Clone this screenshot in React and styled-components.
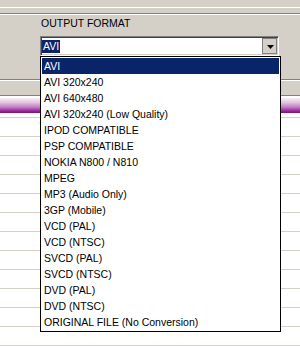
import React from 'react'
import styled, { createGlobalStyle } from 'styled-components'

const formats = [
  'AVI',
  'AVI 320x240',
  'AVI 640x480',
  'AVI 320x240 (Low Quality)',
  'IPOD COMPATIBLE',
  'PSP COMPATIBLE',
  'NOKIA N800 / N810',
  'MPEG',
  'MP3 (Audio Only)',
  '3GP (Mobile)',
  'VCD (PAL)',
  'VCD (NTSC)',
  'SVCD (PAL)',
  'SVCD (NTSC)',
  'DVD (PAL)',
  'DVD (NTSC)',
  'ORIGINAL FILE (No Conversion)'
]

const GlobalStyle = createGlobalStyle`
  html, body {
    margin: 0;
    padding: 0;
    background: #fff;
  }
  body {
    font-family: "Liberation Sans", Arial, sans-serif;
    font-size: 10.5px;
    color: #000;
  }
`

const Window = styled.div`
  position: relative;
  width: 300px;
  height: 346px;
  overflow: hidden;
  background: #fff;
  display: flex;
  flex-direction: column;
`

const Panel = styled.div`
  background: #d4d0c8;
  display: flex;
  flex-direction: column;
  flex: none;
`

const Gap = styled.div`
  height: ${p => p.$h}px;
  flex: none;
`

const Rule = styled.div`
  height: 1px;
  background: ${p => p.$color};
  flex: none;
`

const Group = styled.div`
  height: 64px;
  box-sizing: border-box;
  padding: 2px 0 0 40px;
  display: flex;
  flex-direction: column;
`

const Label = styled.div`
  line-height: 13px;
  padding-left: 1px;
`

const ComboWrap = styled.div`
  position: relative;
  margin-top: 6px;
  width: 239px;
`

const Combo = styled.div`
  height: 20px;
  box-sizing: border-box;
  border: 1px solid;
  border-color: #808080 #fff #fff #808080;
  box-shadow: inset 1px 1px #404040, inset -1px -1px #d4d0c8;
  background: #fff;
  padding: 1px;
  display: flex;
  align-items: center;
`

const Value = styled.span`
  background: #0a246a;
  color: #fff;
  line-height: 13px;
  padding: 0 1px;
`

const DropButton = styled.div`
  margin-left: auto;
  width: 15px;
  height: 16px;
  box-sizing: border-box;
  background: #d4d0c8;
  border: 1px solid #808080;
  display: flex;
  align-items: center;
  justify-content: center;
  padding: 1px 0 0 1px;
`

const List = styled.div`
  position: absolute;
  top: 100%;
  left: 0;
  width: 241px;
  box-sizing: border-box;
  border: 1px solid #000;
  background: #fff;
  padding: 1px;
  z-index: 2;
`

const Item = styled.div`
  height: 16px;
  line-height: 16px;
  padding-left: 2px;
  white-space: nowrap;
  background: ${p => (p.$selected ? '#0a246a' : 'transparent')};
  color: ${p => (p.$selected ? '#fff' : '#000')};
`

const HeaderBand = styled.div`
  height: 14px;
`

const Grid = styled.div`
  flex: 1;
  background: #fff;
  display: flex;
  flex-direction: column;
`

const Row = styled.div`
  flex: none;
  height: ${p => (p.$first ? 21 : 18)}px;
  border-bottom: 1px solid #d4d0c8;
  display: flex;
  flex-direction: column;
`

const SelectedBar = styled.div`
  margin-top: 2px;
  height: 15px;
  background: linear-gradient(
    to bottom,
    #f7eef6 0%,
    #e4c3e1 30%,
    #c47fc4 60%,
    #9a2a9c 85%,
    #7e0a82 100%
  );
`

const Arrow = () => (
  <svg width='7' height='4' viewBox='0 0 7 4'>
    <polygon points='0,0 7,0 3.5,4' fill='#000' />
  </svg>
)

export default function App () {
  const rows = Array.from({ length: 13 })
  return (
    <Window>
      <GlobalStyle />
      <Panel>
        <Gap $h={7} />
        <Rule $color='#fff' />
        <Gap $h={5} />
        <Rule $color='#808080' />
        <Rule $color='#fff' />
        <Group>
          <Label>OUTPUT FORMAT</Label>
          <ComboWrap>
            <Combo>
              <Value>AVI</Value>
              <DropButton>
                <Arrow />
              </DropButton>
            </Combo>
            <List>
              {formats.map((f, i) => (
                <Item key={f} $selected={i === 0}>{f}</Item>
              ))}
            </List>
          </ComboWrap>
        </Group>
        <Rule $color='#808080' />
        <Rule $color='#fff' />
        <HeaderBand />
        <Rule $color='#808080' />
      </Panel>
      <Grid>
        <Row $first>
          <SelectedBar />
        </Row>
        {rows.map((_, i) => (
          <Row key={i} />
        ))}
      </Grid>
    </Window>
  )
}
